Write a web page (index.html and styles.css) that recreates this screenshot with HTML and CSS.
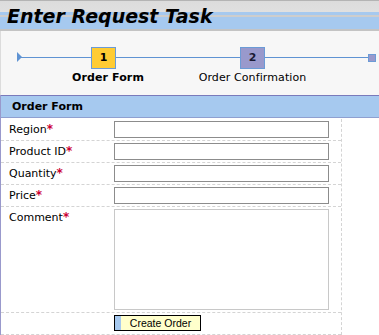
FILE: index.html
```html
<!DOCTYPE html>
<html lang="en">
<head>
    <meta charset="UTF-8">
    <meta name="viewport" content="width=device-width, initial-scale=1.0">
    <title>Enter Request Task</title>
    <link rel="stylesheet" href="styles.css">
</head>
<body>
    <div class="title-bar">
        <h1>Enter Request Task</h1>
    </div>

    <div class="roadmap">
        <div class="track">
            <span class="track-start"></span>
            <div class="step step-current">
                <span class="step-box">1</span>
                <span class="step-label">Order Form</span>
            </div>
            <div class="step step-next">
                <span class="step-box">2</span>
                <span class="step-label">Order Confirmation</span>
            </div>
            <span class="track-end"></span>
        </div>
    </div>

    <div class="panel">
        <div class="panel-head">Order Form</div>
        <div class="form-grid">
            <div class="field-row">
                <label class="field-label" for="region">Region<span class="req">*</span></label>
                <div class="field-input"><input type="text" id="region"></div>
            </div>
            <div class="field-row">
                <label class="field-label" for="product">Product ID<span class="req">*</span></label>
                <div class="field-input"><input type="text" id="product"></div>
            </div>
            <div class="field-row">
                <label class="field-label" for="quantity">Quantity<span class="req">*</span></label>
                <div class="field-input"><input type="text" id="quantity"></div>
            </div>
            <div class="field-row">
                <label class="field-label" for="price">Price<span class="req">*</span></label>
                <div class="field-input"><input type="text" id="price"></div>
            </div>
            <div class="field-row">
                <label class="field-label" for="comment">Comment<span class="req">*</span></label>
                <div class="field-input comment-cell"><textarea id="comment"></textarea></div>
            </div>
            <div class="field-row">
                <span class="field-label"></span>
                <div class="field-input button-cell"><button id="create">Create Order</button></div>
            </div>
        </div>
    </div>
</body>
</html>
```

FILE: styles.css
```css
body {
    margin: 0;
    background-color: #ffffff;
    font-family: "DejaVu Sans", Verdana, sans-serif;
    font-size: 11px;
    color: #000000;
    overflow: hidden;
}
.title-bar {
    height: 31px;
    background: linear-gradient(to bottom,
        #b4b4b4 0, #b4b4b4 1px,
        #dcdcdc 1px, #e0e0e0 12px,
        #a6c9ef 12px, #a6c9ef 15px,
        #cdcdcd 15px, #cdcdcd 17px,
        #a6c9ef 17px, #a6c9ef 29px,
        #c4c4c4 29px, #c4c4c4 31px);
}
h1 {
    margin: 0;
    padding: 1px 0 0 7px;
    font-size: 19px;
    font-style: italic;
    font-weight: bold;
    line-height: 30px;
    white-space: nowrap;
}
.roadmap {
    box-sizing: border-box;
    height: 64px;
    padding-top: 16px;
    background-color: #f7f7f7;
    border-left: 1px solid #dcdcdc;
}
.track {
    display: flex;
    align-items: flex-start;
    width: 359px;
    margin-left: 16px;
    background: linear-gradient(#5f93d3, #5f93d3) no-repeat 0 10px / 100% 1px;
}
.track-start {
    margin-top: 5px;
    border-left: 5px solid #5f93d3;
    border-top: 5px solid transparent;
    border-bottom: 5px solid transparent;
}
.step {
    display: flex;
    flex-direction: column;
    align-items: center;
    width: 25px;
}
.step-current {
    margin-left: 69px;
}
.step-next {
    margin-left: 124px;
}
.step-box {
    box-sizing: border-box;
    width: 25px;
    height: 22px;
    border: 1px solid #6b9bd6;
    font-weight: bold;
    line-height: 20px;
    text-align: center;
}
.step-current .step-box {
    background-color: #ffcc33;
}
.step-next .step-box {
    background-color: #9999cc;
    color: #1a1a33;
}
.step-label {
    margin-top: 2px;
    line-height: 14px;
    white-space: nowrap;
    letter-spacing: 0.1px;
}
.step-current .step-label {
    margin-left: 9px;
    font-weight: bold;
}
.track-end {
    box-sizing: border-box;
    width: 8px;
    height: 8px;
    margin-top: 7px;
    margin-left: 103px;
    background-color: #9999cc;
    border: 1px solid #6b9bd6;
}
.panel {
    border-left: 1px solid #9999cc;
}
.panel-head {
    height: 21px;
    padding-left: 11px;
    background-color: #a6c9ef;
    border-top: 1px solid #7a7abb;
    border-bottom: 1px solid #8fa0d0;
    font-weight: bold;
    line-height: 21px;
}
.form-grid {
    box-sizing: border-box;
    width: 341px;
    margin-top: 1px;
    border-right: 1px dashed #d4d4d4;
}
.field-row {
    display: flex;
    border-bottom: 1px dashed #d4d4d4;
}
.field-label {
    box-sizing: border-box;
    width: 113px;
    padding-left: 8px;
    line-height: 21px;
}
.req {
    color: #cc0033;
    font-weight: bold;
    font-size: 12px;
}
.field-input {
    padding: 2px 0;
}
.field-input input {
    display: block;
    box-sizing: border-box;
    width: 215px;
    height: 17px;
    margin: 0;
    padding: 0 2px;
    border: 1px solid #8c8c8c;
    font: inherit;
}
.comment-cell textarea {
    display: block;
    box-sizing: border-box;
    width: 215px;
    height: 101px;
    margin: 0;
    padding: 2px;
    border: 1px solid #c8c8c8;
    resize: none;
    font: inherit;
}
.button-cell {
    padding-bottom: 3px;
}
#create {
    display: block;
    box-sizing: border-box;
    width: 87px;
    height: 16px;
    margin: 0;
    padding: 0 0 0 6px;
    border: 1px solid #000000;
    background: linear-gradient(to right, #a6c9ef 0, #a6c9ef 6px, #ffffcc 6px);
    font-family: "Liberation Sans", Arial, sans-serif;
    font-size: 10.5px;
    line-height: 14px;
    color: #000000;
    text-align: center;
}
```
